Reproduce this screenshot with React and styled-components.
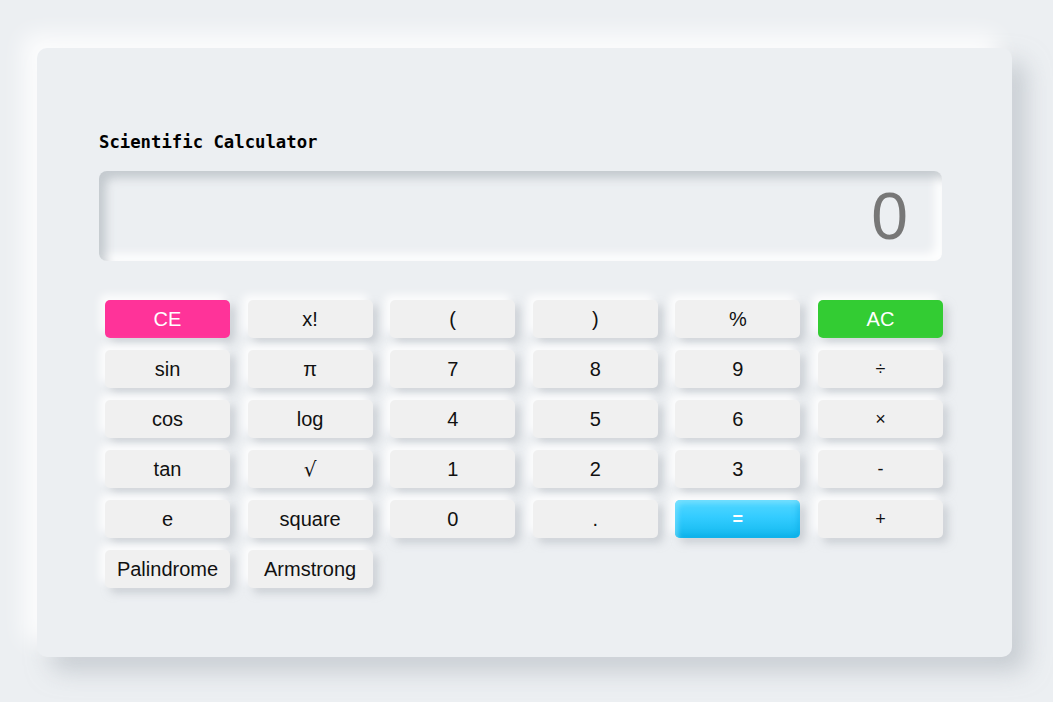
import React, { useState } from "react";
import styled, { createGlobalStyle } from "styled-components";

const GlobalStyle = createGlobalStyle`
  html, body {
    margin: 0;
    padding: 0;
    background: #eceff2;
  }
  body {
    font-family: "Liberation Sans", Arial, sans-serif;
  }
`;

const keys = [
  { label: "CE", kind: "clear" },
  { label: "x!" },
  { label: "(" },
  { label: ")" },
  { label: "%" },
  { label: "AC", kind: "all" },
  { label: "sin" },
  { label: "π" },
  { label: "7" },
  { label: "8" },
  { label: "9" },
  { label: "÷", small: true },
  { label: "cos" },
  { label: "log" },
  { label: "4" },
  { label: "5" },
  { label: "6" },
  { label: "×", small: true },
  { label: "tan" },
  { label: "√", serif: true },
  { label: "1" },
  { label: "2" },
  { label: "3" },
  { label: "-", small: true },
  { label: "e" },
  { label: "square" },
  { label: "0" },
  { label: "." },
  { label: "=", kind: "equal", small: true },
  { label: "+", small: true },
  { label: "Palindrome" },
  { label: "Armstrong" },
];

const App = () => {
  const [value] = useState("0");

  return (
    <Page>
      <GlobalStyle />
      <Card>
        <Title>Scientific Calculator</Title>
        <Display>{value}</Display>
        <Keypad>
          {keys.map((k) => (
            <Key key={k.label} kind={k.kind} $small={k.small} $serif={k.serif}>
              {k.label}
            </Key>
          ))}
        </Keypad>
      </Card>
    </Page>
  );
};

export default App;

const Page = styled.div`
  width: 1053px;
  height: 702px;
  box-sizing: border-box;
  padding: 48px 41px 45px 37px;
  background: #eceff2;
  overflow: hidden;
`;

const Card = styled.div`
  height: 609px;
  box-sizing: border-box;
  background: #eceff2;
  border-radius: 10px;
  padding: 79px 70px 0 62px;
  box-shadow: -14px -14px 22px rgba(255, 255, 255, 0.85),
    14px 14px 24px rgba(170, 176, 184, 0.55);
`;

const Title = styled.h1`
  margin: 0 0 14px;
  font-family: "DejaVu Sans Mono", "Liberation Mono", monospace;
  font-size: 17.3px;
  font-weight: bold;
  line-height: 30px;
  color: #000;
`;

const Display = styled.div`
  height: 90px;
  box-sizing: border-box;
  border-radius: 8px;
  padding: 0 34px 0 0;
  display: flex;
  align-items: center;
  justify-content: flex-end;
  font-family: "Liberation Sans", Arial, sans-serif;
  font-size: 66px;
  color: #777;
  background: #eceff2;
  box-shadow: inset 7px 7px 10px rgba(180, 186, 192, 0.7),
    inset -7px -7px 10px rgba(255, 255, 255, 0.95);
`;

const Keypad = styled.div`
  display: grid;
  grid-template-columns: repeat(6, 125px);
  column-gap: 17.6px;
  row-gap: 12px;
  margin: 39px 0 0 6px;
`;

const Key = styled.button`
  height: 38px;
  border: none;
  border-radius: 5px;
  padding: 0;
  font-family: ${(p) =>
    p.$serif ? '"DejaVu Serif", serif' : '"Liberation Sans", Arial, sans-serif'};
  font-size: ${(p) => (p.$small ? "18px" : "20px")};
  font-weight: ${(p) => (p.kind === "equal" ? "bold" : "normal")};
  color: ${(p) => (p.kind ? "#fff" : "#111")};
  background: ${(p) =>
    p.kind === "clear"
      ? "#ff3399"
      : p.kind === "all"
      ? "#33cc33"
      : p.kind === "equal"
      ? "linear-gradient(180deg, #55d8ff 0%, #33ccff 45%, #11b8ee 100%)"
      : "#f0f0f0"};
  box-shadow: -5px -5px 8px rgba(255, 255, 255, 0.9),
    5px 5px 9px rgba(175, 180, 188, 0.55)
    ${(p) =>
      p.kind === "equal"
        ? ", inset 3px 3px 5px rgba(140, 230, 255, 0.6), inset -3px -3px 5px rgba(0, 160, 220, 0.35)"
        : ""};
  cursor: pointer;
`;
